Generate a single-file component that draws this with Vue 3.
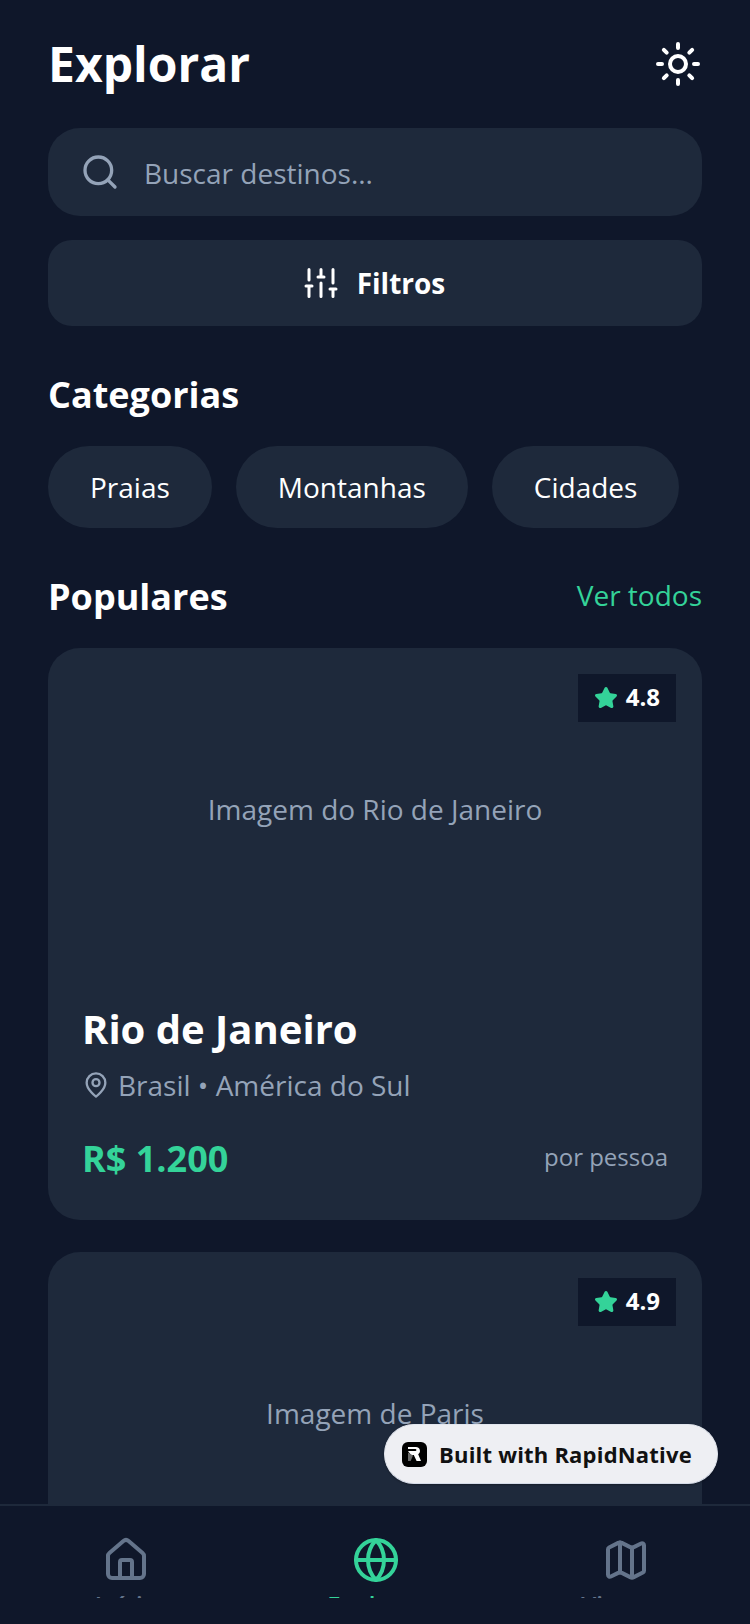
<script setup>
const categories = ["Praias", "Montanhas", "Cidades"];

const destinations = [
  { id: 1, name: "Rio de Janeiro", image: "Imagem do Rio de Janeiro", place: "Brasil • América do Sul", price: "R$ 1.200", rating: "4.8" },
  { id: 2, name: "Paris", image: "Imagem de Paris", place: "França • Europa", price: "R$ 4.500", rating: "4.9" },
];
</script>

<template>
  <div class="screen">
    <main class="content">
      <header class="top">
        <h1>Explorar</h1>
        <svg class="sun" width="48" height="48" viewBox="0 0 24 24" fill="none" stroke="#fff" stroke-width="2" stroke-linecap="round">
          <circle cx="12" cy="12" r="4" />
          <path d="M12 2v2M12 20v2M4.93 4.93l1.41 1.41M17.66 17.66l1.41 1.41M2 12h2M20 12h2M6.34 17.66l-1.41 1.41M19.07 4.93l-1.41 1.41" />
        </svg>
      </header>

      <div class="search">
        <svg width="40" height="40" viewBox="0 0 24 24" fill="none" stroke="#94a3b8" stroke-width="2" stroke-linecap="round">
          <circle cx="11" cy="11" r="8" />
          <path d="m21 21-4.3-4.3" />
        </svg>
        <span>Buscar destinos...</span>
      </div>

      <button class="filters">
        <svg width="36" height="36" viewBox="0 0 24 24" fill="none" stroke="#fff" stroke-width="2" stroke-linecap="round">
          <path d="M4 21v-7M4 10V3M12 21v-9M12 8V3M20 21v-5M20 12V3M2 14h4M10 8h4M18 16h4" />
        </svg>
        <span>Filtros</span>
      </button>

      <h2 class="categories-title">Categorias</h2>
      <div class="chips">
        <div class="chip" v-for="c in categories" :key="c">{{ c }}</div>
      </div>

      <div class="section-head">
        <h2>Populares</h2>
        <span class="see-all">Ver todos</span>
      </div>

      <article class="card" v-for="d in destinations" :key="d.id">
        <div class="card-image">
          <span>{{ d.image }}</span>
          <div class="rating">
            <svg width="24" height="24" viewBox="0 0 24 24" fill="#34d399" stroke="#34d399" stroke-width="2" stroke-linecap="round" stroke-linejoin="round">
              <path d="M11.525 2.295a.53.53 0 0 1 .95 0l2.31 4.679a2.123 2.123 0 0 0 1.595 1.16l5.166.756a.53.53 0 0 1 .294.904l-3.736 3.638a2.123 2.123 0 0 0-.611 1.878l.882 5.14a.53.53 0 0 1-.771.56l-4.618-2.428a2.122 2.122 0 0 0-1.973 0L6.396 21.01a.53.53 0 0 1-.77-.56l.881-5.139a2.122 2.122 0 0 0-.611-1.879L2.16 9.795a.53.53 0 0 1 .294-.906l5.165-.755a2.122 2.122 0 0 0 1.597-1.16z" />
            </svg>
            <span>{{ d.rating }}</span>
          </div>
        </div>
        <div class="card-body">
          <h3>{{ d.name }}</h3>
          <div class="place">
            <svg width="28" height="28" viewBox="0 0 24 24" fill="none" stroke="#94a3b8" stroke-width="2" stroke-linecap="round" stroke-linejoin="round">
              <path d="M20 10c0 6-8 12-8 12s-8-6-8-12a8 8 0 0 1 16 0Z" />
              <circle cx="12" cy="10" r="3" />
            </svg>
            <span>{{ d.place }}</span>
          </div>
          <div class="price-row">
            <span class="price">{{ d.price }}</span>
            <span class="per">por pessoa</span>
          </div>
        </div>
      </article>
    </main>

    <div class="built">
      <span class="built-logo">
        <svg width="15" height="16" viewBox="0 0 15 16" fill="none">
          <path d="M1 1h8a4 4 0 0 1 2.2 7.3L14 15H9.6L6.8 9H4L1 5h7.4a1 1 0 0 0 0-2H1z" fill="#fff" />
          <path d="M1 6.5 6 9.5 3.6 15H1z" fill="#6b6b6b" />
        </svg>
      </span>
      <span>Built with RapidNative</span>
    </div>

    <nav class="tabs">
      <div class="tab">
        <svg width="48" height="48" viewBox="0 0 24 24" fill="none" stroke="#64748b" stroke-width="2" stroke-linecap="round" stroke-linejoin="round">
          <path d="M15 21v-8a1 1 0 0 0-1-1h-4a1 1 0 0 0-1 1v8" />
          <path d="M3 10a2 2 0 0 1 .709-1.528l7-5.999a2 2 0 0 1 2.582 0l7 5.999A2 2 0 0 1 21 10v9a2 2 0 0 1-2 2H5a2 2 0 0 1-2-2z" />
        </svg>
        <span>Início</span>
      </div>
      <div class="tab active">
        <svg width="48" height="48" viewBox="0 0 24 24" fill="none" stroke="#34d399" stroke-width="2" stroke-linecap="round" stroke-linejoin="round">
          <circle cx="12" cy="12" r="10" />
          <path d="M12 2a14.5 14.5 0 0 0 0 20 14.5 14.5 0 0 0 0-20" />
          <path d="M2 12h20" />
        </svg>
        <span>Explorar</span>
      </div>
      <div class="tab">
        <svg width="48" height="48" viewBox="0 0 24 24" fill="none" stroke="#64748b" stroke-width="2" stroke-linecap="round" stroke-linejoin="round">
          <path d="M14.106 5.553a2 2 0 0 0 1.788 0l3.659-1.83A1 1 0 0 1 21 4.619v12.764a1 1 0 0 1-.553.894l-4.553 2.277a2 2 0 0 1-1.788 0l-4.212-2.106a2 2 0 0 0-1.788 0l-3.659 1.83A1 1 0 0 1 3 19.381V6.618a1 1 0 0 1 .553-.894l4.553-2.277a2 2 0 0 1 1.788 0z" />
          <path d="M15 5.764v15" />
          <path d="M9 3.236v15" />
        </svg>
        <span>Viagens</span>
      </div>
    </nav>
  </div>
</template>

<style>
html,
body {
  margin: 0;
  background: #0f172a;
}
</style>

<style scoped>
.screen {
  position: relative;
  width: 750px;
  height: 1624px;
  overflow: hidden;
  background: #0f172a;
  font-family: "Open Sans", sans-serif;
  color: #fff;
  display: flex;
  flex-direction: column;
}

.content {
  flex: 1;
  min-height: 0;
  overflow: hidden;
  padding: 32px 48px 0;
}

h1,
h2,
h3 {
  margin: 0;
  font-weight: 700;
}

.top {
  display: flex;
  justify-content: space-between;
  align-items: center;
  height: 64px;
}

h1 {
  font-size: 48px;
  line-height: 64px;
}

.search {
  margin-top: 32px;
  height: 88px;
  border-radius: 32px;
  background: #1e293b;
  display: flex;
  align-items: center;
  padding: 0 32px;
  gap: 24px;
  font-size: 28px;
  line-height: 40px;
  color: #94a3b8;
}

.search span {
  padding-top: 2px;
}

.filters {
  width: 100%;
  margin-top: 24px;
  height: 86px;
  border: none;
  border-radius: 24px;
  padding: 0 2px 0 0;
  background: #1e293b;
  color: #fff;
  font-family: inherit;
  font-size: 28px;
  font-weight: 700;
  display: flex;
  align-items: center;
  justify-content: center;
  gap: 18px;
}

.categories-title {
  margin-top: 45px;
  font-size: 36px;
  line-height: 48px;
}

.chips {
  display: flex;
  gap: 24px;
  margin-top: 27px;
}

.chip {
  flex: none;
  height: 82px;
  padding: 0 42px;
  border-radius: 41px;
  background: #1e293b;
  font-size: 28px;
  display: flex;
  align-items: center;
}

.section-head {
  display: flex;
  justify-content: space-between;
  align-items: center;
  margin-top: 44px;
  height: 48px;
}

.section-head h2 {
  font-size: 36px;
  line-height: 48px;
  margin-top: 2px;
}

.see-all {
  color: #34d399;
  font-size: 28px;
  margin-bottom: 2px;
}

.card {
  margin-top: 28px;
  border-radius: 32px;
  background: #1e293b;
  margin-bottom: 32px;
}

.card-image {
  position: relative;
  height: 322px;
  display: flex;
  align-items: center;
  justify-content: center;
  font-size: 28px;
  color: #94a3b8;
}

.rating {
  position: absolute;
  top: 26px;
  right: 26px;
  height: 48px;
  padding: 0 16px;
  background: #0f172a;
  display: flex;
  align-items: center;
  gap: 8px;
  color: #fff;
  font-size: 24px;
  font-weight: 700;
}

.rating span {
  margin-bottom: 4px;
}

.card-body {
  padding: 31px 34px 37px;
}

h3 {
  font-size: 40px;
  line-height: 56px;
}

.place {
  display: flex;
  align-items: center;
  gap: 8px;
  margin-top: 9px;
  font-size: 28px;
  color: #94a3b8;
}

.price-row {
  display: flex;
  justify-content: space-between;
  align-items: center;
  margin-top: 30px;
}

.price {
  font-size: 36px;
  font-weight: 700;
  color: #34d399;
}

.per {
  font-size: 24px;
  color: #94a3b8;
  margin-bottom: 4px;
}

.built {
  position: absolute;
  left: 384px;
  top: 1424px;
  width: 334px;
  height: 60px;
  box-sizing: border-box;
  border: 1px solid #e2e6ee;
  border-bottom-color: #d5dbe8;
  border-radius: 30px;
  background: #eeeff3;
  box-shadow: 0 1px 2px rgba(0, 0, 0, 0.3);
  display: flex;
  align-items: center;
  gap: 12px;
  padding-left: 17px;
  color: #111;
  font-size: 22px;
  font-weight: 700;
  letter-spacing: 0.2px;
}

.built-logo {
  width: 25px;
  height: 25px;
  border-radius: 6px;
  background: #000;
  display: flex;
  align-items: center;
  justify-content: center;
}

.tabs {
  flex: none;
  height: 94px;
  box-sizing: border-box;
  border-top: 2px solid #1e293b;
  background: #0f172a;
  display: flex;
  overflow: hidden;
  margin-bottom: 26px;
  padding-top: 30px;
}

.tab {
  flex: 1;
  padding-left: 2px;
  display: flex;
  flex-direction: column;
  align-items: center;
  gap: 4px;
  color: #64748b;
  font-size: 24px;
  font-weight: 600;
}

.tab svg {
  flex: none;
}

.tab.active {
  color: #34d399;
}
</style>
